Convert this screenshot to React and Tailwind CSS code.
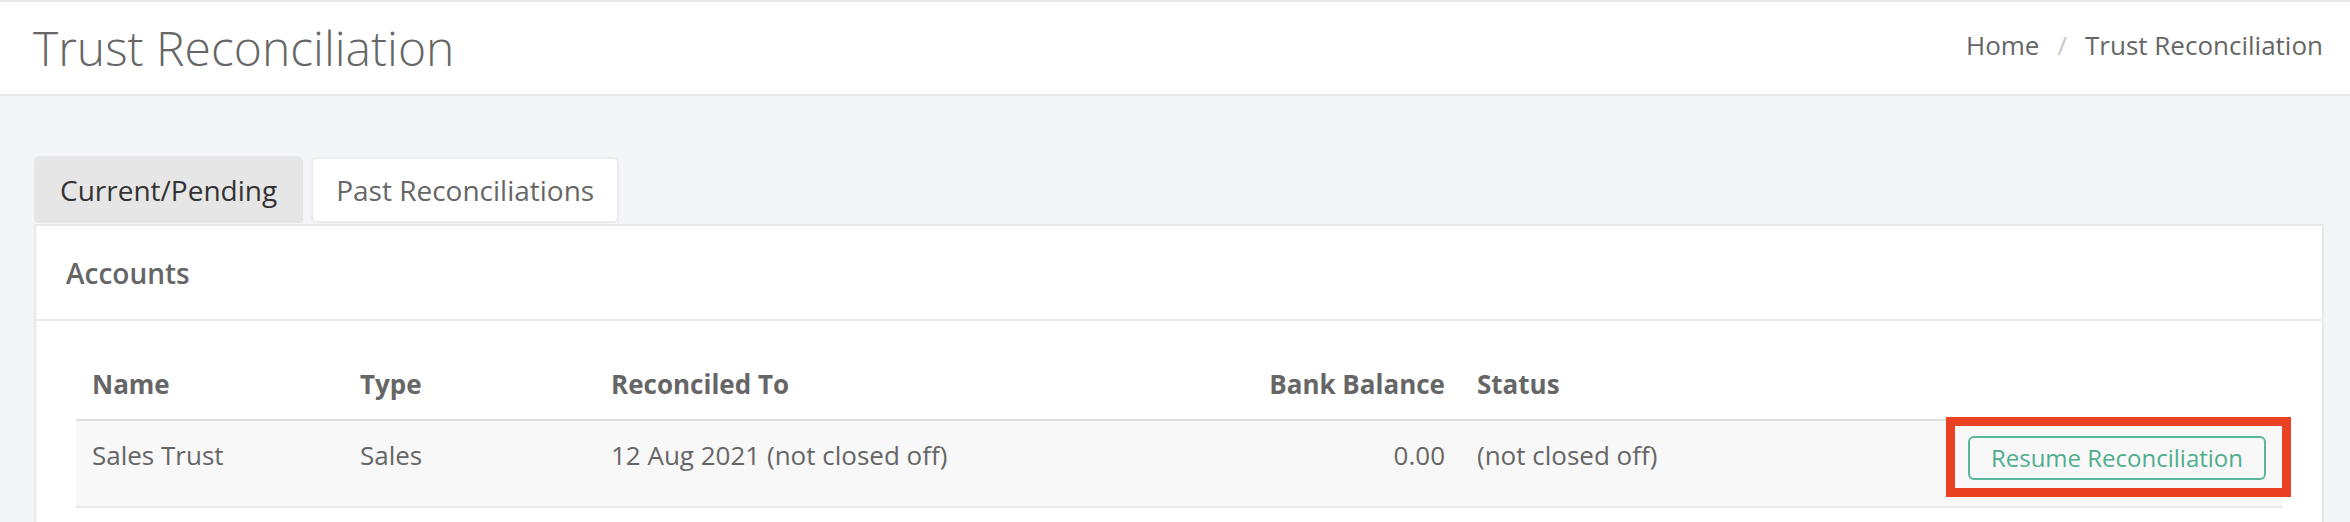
import React from "react";

export default function App() {
  return (
    <div
      className="min-h-screen bg-[#f4f5f8] text-[#666]"
      style={{ fontFamily: '"Open Sans", "Noto Sans", Arial, sans-serif' }}
    >
      <header className="bg-white border-y-2 border-[#e8e8e8] h-[96px] flex items-center justify-between pl-[33px] pr-[27px]">
        <h1 className="text-[48px] font-light text-[#666] leading-none">
          Trust Reconciliation
        </h1>
        <nav className="text-[26px] text-[#666] flex items-center -mt-[5px]">
          <span>Home</span>
          <span className="mx-[18px] text-[#c8c8c8]">/</span>
          <span>Trust Reconciliation</span>
        </nav>
      </header>

      <main className="pl-[34px] pr-[26px] pt-[60px]">
        <div className="flex items-center gap-[8px]">
          <div className="h-[67px] px-[26px] bg-[#e6e6e6] rounded-t-[6px] rounded-b-[3px] text-[#333] text-[28px] flex items-center">
            Current/Pending
          </div>
          <div className="h-[66px] px-[23px] bg-white border-2 border-[#ececec] rounded-[6px] text-[#666] text-[28px] flex items-center">
            Past Reconciliations
          </div>
        </div>

        <div className="mt-px bg-white border-2 border-[#e8e8ea]">
          <div className="h-[95px] border-b-2 border-[#e8e8e8] px-[30px] flex items-center">
            <span className="text-[28px] font-semibold text-[#666]">Accounts</span>
          </div>
          <div className="px-[40px] pt-[31px] pb-[40px]">
            <table className="w-full table-fixed border-collapse text-[26px]">
              <colgroup>
                <col className="w-[268px]" />
                <col className="w-[251px]" />
                <col className="w-[405px]" />
                <col className="w-[461px]" />
                <col className="w-[489px]" />
                <col className="w-[332px]" />
              </colgroup>
              <thead>
                <tr>
                  <th className="text-left font-bold px-[16px] pt-[14px] pb-[17px] leading-[36px] border-b-2 border-[#dedede]">
                    Name
                  </th>
                  <th className="text-left font-bold px-[16px] pt-[14px] pb-[17px] leading-[36px] border-b-2 border-[#dedede]">
                    Type
                  </th>
                  <th className="text-left font-bold px-[16px] pt-[14px] pb-[17px] leading-[36px] border-b-2 border-[#dedede]">
                    Reconciled To
                  </th>
                  <th className="text-right font-bold px-[16px] pt-[14px] pb-[17px] leading-[36px] border-b-2 border-[#dedede]">
                    Bank Balance
                  </th>
                  <th className="text-left font-bold px-[16px] pt-[14px] pb-[17px] leading-[36px] border-b-2 border-[#dedede]">
                    Status
                  </th>
                  <th className="px-[16px] border-b-2 border-[#dedede]"></th>
                </tr>
              </thead>
              <tbody>
                <tr className="bg-[#f8f8f8]">
                  <td className="align-top px-[16px] pt-[16px] leading-[36px] border-b-2 border-[#e8e8e8]">
                    Sales Trust
                  </td>
                  <td className="align-top px-[16px] pt-[16px] leading-[36px] border-b-2 border-[#e8e8e8]">
                    Sales
                  </td>
                  <td className="align-top px-[16px] pt-[16px] leading-[36px] border-b-2 border-[#e8e8e8] whitespace-nowrap">
                    12 Aug 2021 (not closed off)
                  </td>
                  <td className="align-top text-right px-[16px] pt-[16px] leading-[36px] border-b-2 border-[#e8e8e8]">
                    0.00
                  </td>
                  <td className="align-top px-[16px] pt-[16px] leading-[36px] border-b-2 border-[#e8e8e8]">
                    (not closed off)
                  </td>
                  <td className="align-top text-right px-[16px] pt-[15px] pb-[26px] border-b-2 border-[#e8e8e8]">
                    <span className="relative inline-block align-top">
                      <button className="h-[44px] px-[21px] border-2 border-[#58b79a] rounded-[6px] text-[24px] leading-none text-[#4fae8e] whitespace-nowrap bg-transparent">
                        Resume Reconciliation
                      </button>
                      <span className="absolute -left-[22px] -right-[25px] -top-[19px] -bottom-[17px] border-[9px] border-[#ea4125] pointer-events-none"></span>
                    </span>
                  </td>
                </tr>
              </tbody>
            </table>
          </div>
        </div>
      </main>
    </div>
  );
}
